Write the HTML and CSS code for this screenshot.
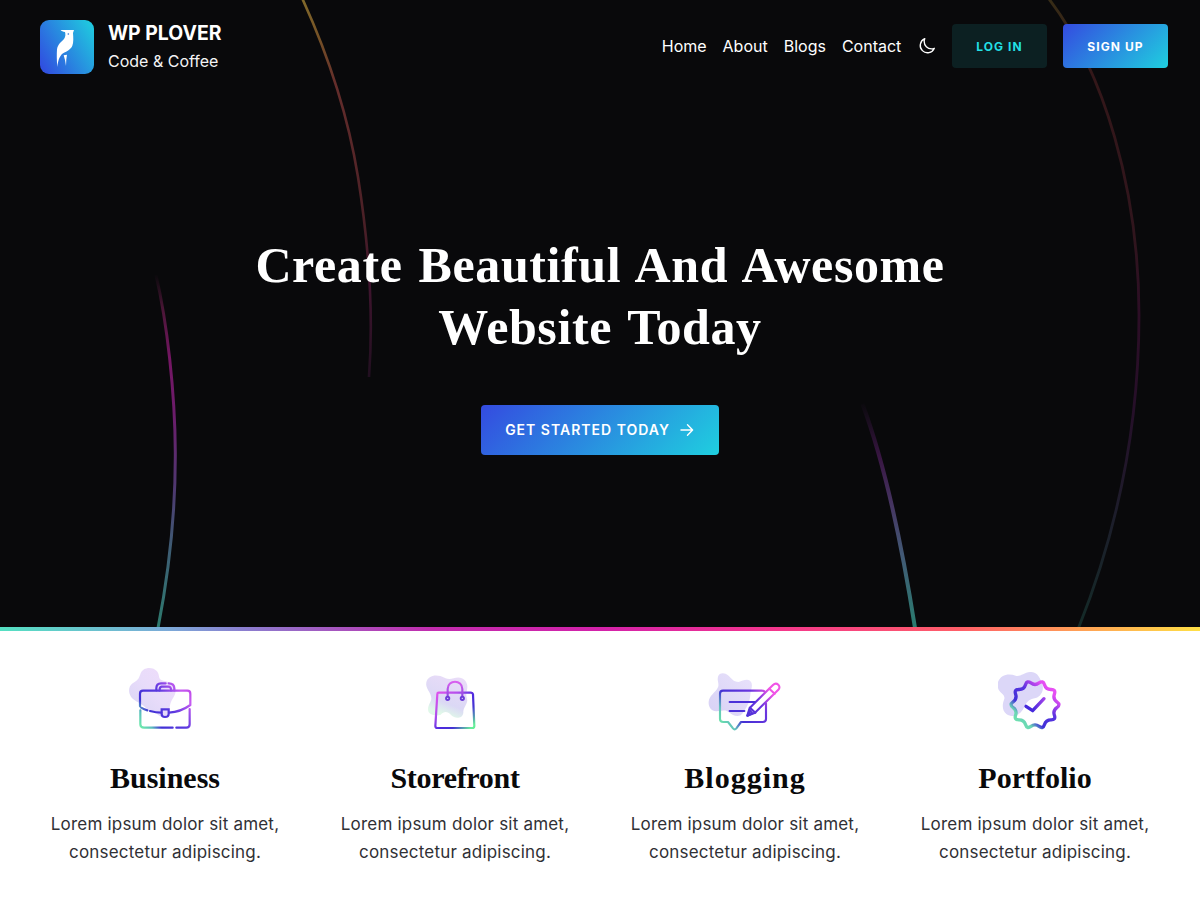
FILE: index.html
```html
<!DOCTYPE html>
<html lang="en">
<head>
<meta charset="utf-8">
<title>WP Plover</title>
<link rel="stylesheet" href="styles.css">
</head>
<body>
<section class="hero">
  <svg class="arcs" viewBox="0 0 1200 627" fill="none">
    <defs>
      <linearGradient id="a1" gradientUnits="userSpaceOnUse" x1="0" y1="0" x2="0" y2="378"><stop stop-color="#81692b"/><stop offset=".1" stop-color="#755126"/><stop offset=".22" stop-color="#642d2b"/><stop offset=".6" stop-color="#491f26"/><stop offset=".74" stop-color="#41152f"/><stop offset="1" stop-color="#210f20"/></linearGradient>
      <linearGradient id="a2" gradientUnits="userSpaceOnUse" x1="0" y1="274" x2="0" y2="627"><stop stop-color="#09090b"/><stop offset=".1" stop-color="#4a1636"/><stop offset=".24" stop-color="#741663"/><stop offset=".4" stop-color="#6b1c6b"/><stop offset=".62" stop-color="#4c3a70"/><stop offset=".78" stop-color="#3e5d74"/><stop offset="1" stop-color="#2d7a6e"/></linearGradient>
      <linearGradient id="a3" gradientUnits="userSpaceOnUse" x1="0" y1="401" x2="0" y2="627"><stop stop-color="#09090b"/><stop offset=".25" stop-color="#381642"/><stop offset=".45" stop-color="#453360"/><stop offset=".68" stop-color="#425975"/><stop offset="1" stop-color="#2a7c6f"/></linearGradient>
      <linearGradient id="a4" gradientUnits="userSpaceOnUse" x1="0" y1="0" x2="0" y2="627"><stop stop-color="#372c16"/><stop offset=".12" stop-color="#341719"/><stop offset=".38" stop-color="#30151d"/><stop offset=".5" stop-color="#2d0e26"/><stop offset=".65" stop-color="#260f29"/><stop offset=".82" stop-color="#1d1d2b"/><stop offset="1" stop-color="#142b28"/></linearGradient>
    </defs>
    <path stroke="url(#a1)" stroke-width="2.6" d="M302.5-1C329 57 349 121 358 177C368 240 374 310 369 377"/>
    <path stroke="url(#a2)" stroke-width="3" d="M156 275C167 322 175 392 175.3 452C175.6 517 168 577 158 628"/>
    <path stroke="url(#a3)" stroke-width="4" d="M862.5 404C884 462 902 545 915 628"/>
    <path stroke="url(#a4)" stroke-width="2.8" d="M1049-1C1104 71 1139 190 1139 315C1139 425 1117 532 1078.5 628"/>
  </svg>
  <header class="topbar">
    <div class="brand">
      <svg class="logo" viewBox="30 30 162 162">
        <defs><linearGradient id="lg" x1="0" y1=".8" x2="1" y2=".2"><stop stop-color="#3050e0"/><stop offset="1" stop-color="#20c6df"/></linearGradient></defs>
        <rect x="30" y="30" width="162" height="162" rx="27" fill="url(#lg)"/>
        <path fill="#fff" d="M92 60H132L129 69C130 82 131 98 127 107C122 119 110 124 102 128C91 134 85 145 82 171C80 151 80 132 81 118C84 101 95 95 102 87C107 81 107 72 105 66C99 65 94 63 92 60ZM101 136L111 134L109 148L108 168L105 150Z"/>
        <circle cx="115" cy="72" r="2.5" fill="#2b75df"/>
      </svg>
      <div><div class="name">WP PLOVER</div><div class="tagline">Code &amp; Coffee</div></div>
    </div>
    <nav class="nav">
      <a>Home</a><a>About</a><a>Blogs</a><a>Contact</a>
      <svg class="moon" viewBox="0 0 24 24"><path d="M21.75 15A9.7 9.7 0 0 1 18 15.75C12.6 15.75 8.25 11.4 8.25 6C8.25 4.7 8.5 3.4 9 2.25A9.75 9.75 0 1 0 21.75 15Z"/></svg>
      <a class="btn ghost">LOG IN</a><a class="btn solid">SIGN UP</a>
    </nav>
  </header>
  <div class="pitch">
    <h1>Create Beautiful And Awesome<br>Website Today</h1>
    <a class="btn cta">GET STARTED TODAY <svg viewBox="0 0 16 16"><path d="M2 8H13.5M8.5 2.8L13.6 8L8.5 13.2"/></svg></a>
  </div>
</section>
<div class="rainbow"></div>
<section class="features">
  <article>
    <svg class="icon" viewBox="0 0 270 240">
      <defs>
        <linearGradient id="g" x1="0" y1="1" x2="1" y2="0"><stop stop-color="#75efaa"/><stop offset=".22" stop-color="#6ad5b5"/><stop offset=".34" stop-color="#4030d8"/><stop offset=".57" stop-color="#5934df"/><stop offset=".8" stop-color="#e34cf3"/><stop offset="1" stop-color="#ef5cf4"/></linearGradient>
        <linearGradient id="gb" gradientUnits="userSpaceOnUse" x1="60" y1="203" x2="211" y2="88"><stop stop-color="#70efa9"/><stop offset=".15" stop-color="#5bbebd"/><stop offset=".27" stop-color="#4131d5"/><stop offset=".58" stop-color="#5b39df"/><stop offset=".87" stop-color="#c65bf2"/><stop offset="1" stop-color="#c04ae9"/></linearGradient>
        <linearGradient id="b1" x1="0" y1="1" x2="1" y2="0"><stop stop-color="#d7d4f4"/><stop offset=".5" stop-color="#e8dcfa"/><stop offset="1" stop-color="#f0ddfb"/></linearGradient>
      </defs>
      <path fill="url(#b1)" d="M61 43C67 20 99 19 111 34C121 47 112 58 130 62C153 66 171 76 167 96C161 118 151 119 149 144C147 171 126 177 112 163C100 149 91 158 78 144C65 130 54 129 39 117C24 104 23 80 38 70C53 61 55 59 61 43Z"/>
      <g fill="none" stroke="url(#gb)" stroke-width="6.6" stroke-linecap="round">
        <path d="M60 139V101Q60 92 69 92H202Q211 92 211 101V135C186 153 164 157 147 158M63 143Q73 149 82 151M90 153Q108 158 124 158M61 151V193Q61 203 72 203H158M169 203H199Q209 203 209 193V147"/>
        <path d="M109 91V85Q109 70 123 70H137M146 70Q163 70 163 85V91M119 91Q118 81 125 80H145Q154 80 153 91"/>
        <path d="M125 148H146V162Q146 171 135 171Q125 171 125 162Z"/>
      </g>
    </svg>
    <h2>Business</h2><p>Lorem ipsum dolor sit amet,<br>consectetur adipiscing.</p>
  </article>
  <article>
    <svg class="icon" viewBox="-15 0 270 240">
      <defs>
        <linearGradient id="gs" gradientUnits="userSpaceOnUse" x1="65" y1="95" x2="178" y2="205"><stop stop-color="#e251ed"/><stop offset=".3" stop-color="#b250ec"/><stop offset=".53" stop-color="#4e29df"/><stop offset=".7" stop-color="#4433d3"/><stop offset=".95" stop-color="#66ef99"/></linearGradient>
        <linearGradient id="gh" x1="0" y1="0" x2="0" y2="1"><stop stop-color="#d960ef"/><stop offset="1" stop-color="#8a46df"/></linearGradient>
        <linearGradient id="b2" x1=".6" y1="0" x2=".2" y2="1"><stop stop-color="#e9dcf8"/><stop offset=".6" stop-color="#dbd8f5"/><stop offset=".85" stop-color="#e0f8e9"/></linearGradient>
      </defs>
      <path fill="url(#b2)" d="M34 67C38 48 58 43 76 48C91 53 96 60 116 55C139 46 156 61 157 77C158 92 151 99 156 116C161 129 143 143 145 158C143 177 119 177 109 166C97 153 87 154 77 164C64 169 44 166 40 154C36 136 49 128 49 115C49 98 30 86 34 67Z"/>
      <path d="M71 98H168Q173 98 174 103L178 198Q178 204 172 204H67Q61 204 61 198L67 102Q67 98 71 98Z" fill="none" stroke="url(#gs)" stroke-width="6.6"/>
      <g fill="none" stroke="url(#gh)" stroke-width="6.4"><path d="M98 113V87C98 58 142 58 142 87V113"/></g>
      <g fill="none" stroke="#6c3cd8" stroke-width="5.5"><circle cx="98" cy="115" r="5"/><circle cx="142" cy="115" r="5"/></g>
    </svg>
    <h2 class="snug">Storefront</h2><p>Lorem ipsum dolor sit amet,<br>consectetur adipiscing.</p>
  </article>
  <article>
    <svg class="icon" viewBox="0 0 270 240">
      <defs><linearGradient id="gp" gradientUnits="userSpaceOnUse" x1="55" y1="205" x2="237" y2="75"><stop stop-color="#70f5a0"/><stop offset=".18" stop-color="#62c2bc"/><stop offset=".32" stop-color="#4431d4"/><stop offset=".65" stop-color="#6b35df"/><stop offset=".86" stop-color="#f054e6"/></linearGradient>
      <linearGradient id="b3" x1="0" y1="1" x2="1" y2="0"><stop stop-color="#d7d1f5"/><stop offset="1" stop-color="#e9e2fb"/></linearGradient></defs>
      <path fill="url(#b3)" d="M54 50C57 37 75 37 84 46C96 56 99 66 116 66C128 63 139 55 150 62C162 73 152 89 151 104C150 128 138 143 128 160C117 175 99 167 87 157C75 147 70 153 54 153C34 157 22 138 27 119C33 103 52 92 55 79C57 67 51 62 54 50Z"/>
      <g fill="none" stroke="url(#gp)" stroke-width="6.4" stroke-linecap="round" stroke-linejoin="round">
        <path d="M195 98Q194 92 186 92H69Q60 92 60 101V177Q60 186 70 186H84L99 205Q104 211 109 205L123 186H188Q198 186 198 177V130"/>
        <path fill="#fff" d="M142 167L149 144L219 75C230 64 245 79 235 89L165 158Z"/>
        <path d="M150 143L166 158M208 86L224 101M142 167L150 152L157 160Z"/>
      </g>
      <path fill="none" stroke="#4b30d8" stroke-width="6.4" stroke-linecap="round" d="M89 126H164M89 153H133"/>
    </svg>
    <h2 class="wide">Blogging</h2><p>Lorem ipsum dolor sit amet,<br>consectetur adipiscing.</p>
  </article>
  <article>
    <svg class="icon" viewBox="0 0 270 240">
      <path fill="#dcd7f8" d="M24 66C32 43 57 39 77 47C90 51 102 38 120 36C137 34 147 47 153 62C165 84 157 107 137 114C119 118 112 122 103 141C91 166 70 176 49 162C36 151 36 133 43 117C46 101 28 100 24 84Z"/>
      <g fill="none" stroke="url(#g)" stroke-width="10" stroke-linecap="round" stroke-linejoin="round">
        <path transform="translate(135 134)" d="M65.6-8.7Q78 0 65.6 8.7T58.2 31.6T48 45.6T28.5 59.7T12.1 65.1T-12.1 65.1T-28.5 59.7T-48 45.6T-58.2 31.6T-65.6 8.7T-65.6-8.7T-58.2-31.6T-48-45.6T-28.5-59.7T-12.1-65.1T12.1-65.1T28.5-59.7T48-45.6T58.2-31.6T65.6-8.7Z"/>
      </g>
      <linearGradient id="gc" x1="0" x2="1"><stop offset=".4" stop-color="#4529dc"/><stop offset="1" stop-color="#a044ea"/></linearGradient>
      <path fill="none" stroke="url(#gc)" stroke-width="10" stroke-linecap="round" stroke-linejoin="round" d="M108 139L128 152L162 116"/>
    </svg>
    <h2>Portfolio</h2><p>Lorem ipsum dolor sit amet,<br>consectetur adipiscing.</p>
  </article>
</section>
</body>
</html>
```
FILE: styles.css
```css
* { box-sizing: border-box; }
body { margin: 0; width: 1200px; height: 900px; overflow: hidden; background: #fff; font-family: Inter, sans-serif; }
.hero { position: relative; height: 627px; background: #09090b; color: #fff; }
.arcs { position: absolute; inset: 0; width: 1200px; height: 627px; }
.topbar { position: relative; display: flex; justify-content: space-between; align-items: flex-start; height: 94px; padding: 19px 32px 0 40px; }
.brand { display: flex; gap: 14px; align-items: center; }
.logo { width: 54px; height: 54px; display: block; }
.name { font-size: 19.4px; font-weight: 700; line-height: 28px; }
.tagline { font-size: 16px; line-height: 28px; color: #f4f4f5; }
.nav { display: flex; align-items: center; gap: 16px; padding-top: 5px; font-size: 16px; }
.moon { width: 18px; height: 18px; margin-left: .5px; margin-right: .2px; fill: none; stroke: #fff; stroke-width: 1.8; stroke-linejoin: round; }
.btn { display: inline-flex; align-items: center; justify-content: center; border-radius: 4px; white-space: nowrap; letter-spacing: 1px; }
.ghost, .solid { height: 44px; font-size: 12px; font-weight: 700; }
.ghost { width: 95px; background: #0c2022; color: #22dfe4; letter-spacing: 1.1px; }
.solid { width: 105px; letter-spacing: 1.1px; }
.solid, .cta { background: linear-gradient(135deg, #344be0, #1fcfdf); }
.pitch { position: relative; display: flex; flex-direction: column; align-items: center; padding-top: 141px; }
h1, h2 { margin: 0; font-family: "Liberation Serif", serif; font-weight: 700; text-align: center; }
h1 { height: 170px; font-size: 50px; line-height: 61.5px; letter-spacing: .6px; word-spacing: 3px; }
.cta { width: 238px; height: 50px; padding-bottom: 1px; gap: 9px; font-size: 14px; font-weight: 600; }
.cta svg { width: 16px; height: 16px; fill: none; stroke: #fff; stroke-width: 1.4; stroke-linecap: round; stroke-linejoin: round; }
.rainbow { height: 4px; background: linear-gradient(90deg, #55e0c2, #7caad8 14%, #8a80d0 20%, #c22cae 36%, #d322aa 50%, #f3358e 64%, #ff5f68 80%, #ffa056 90%, #ffe046); }
.features { display: grid; grid-template-columns: repeat(4, 290px); justify-content: center; padding-top: 29px; text-align: center; }
.icon { display: block; width: 90px; height: 80px; margin: 0 auto; }
h2 { margin-top: 19px; font-size: 30px; line-height: 38px; color: #09090b; }
.snug { letter-spacing: -.3px; }
.wide { letter-spacing: 1px; }
p { margin: 13px 0 0; font-size: 17px; line-height: 28px; letter-spacing: .2px; color: #303035; }
```
